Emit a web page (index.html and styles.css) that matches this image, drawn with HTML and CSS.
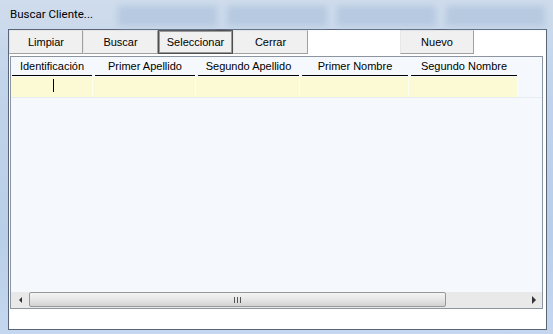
FILE: index.html
```html
<!DOCTYPE html>
<html lang="es">
<head>
  <meta charset="UTF-8">
  <title>Buscar Cliente...</title>
  <link rel="stylesheet" href="styles.css">
</head>
<body>

  <div class="window">
    <div class="titlebar">
      <div class="ghost-tabs"><span></span><span></span><span></span><span></span></div>
      <span class="title">Buscar Cliente...</span>
    </div>

    <div class="client">
      <div class="toolbar">
        <button class="btn btn-first">Limpiar</button>
        <button class="btn">Buscar</button>
        <button class="btn btn-focus">Seleccionar</button>
        <button class="btn">Cerrar</button>
        <button class="btn btn-nuevo">Nuevo</button>
      </div>

      <div class="grid">
        <div class="grid-head">
          <div class="head-cell">Identificación</div>
          <div class="head-cell">Primer Apellido</div>
          <div class="head-cell">Segundo Apellido</div>
          <div class="head-cell">Primer Nombre</div>
          <div class="head-cell">Segundo Nombre</div>
        </div>
        <div class="grid-row">
          <div class="cell"><span class="caret"></span></div>
          <div class="cell"></div>
          <div class="cell"></div>
          <div class="cell"></div>
          <div class="cell"></div>
        </div>
        <div class="grid-empty"></div>
        <div class="hscroll">
          <div class="arrow-btn"><span class="arrow-left"></span></div>
          <div class="thumb"><span class="grip"></span></div>
          <div class="track"></div>
          <div class="arrow-btn arrow-btn-right"><span class="arrow-right"></span></div>
        </div>
      </div>

      <div class="client-foot"></div>
    </div>
  </div>

</body>
</html>
```

FILE: styles.css
```css
body { margin: 0; width: 553px; height: 334px; overflow: hidden; font-family: "Liberation Sans", Arial, sans-serif; font-size: 11px; color: #000; background: linear-gradient(#cfdcec, #c0d3ea 30%, #b9cee8 70%, #c4d7ee); }
.window { display: flex; flex-direction: column; height: 334px; }

/* faint blurred tabs of the window behind the glass title bar */
.titlebar { position: relative; height: 29px; flex: none; }
.ghost-tabs { position: absolute; top: 6px; left: 118px; right: 8px; height: 20px; display: flex; gap: 10px; filter: blur(3px); }
.ghost-tabs span { flex: 1; background: #b6c9e0; }
.title { position: relative; display: block; padding: 7px 0 0 10px; font-family: Roboto, "Liberation Sans", sans-serif; font-size: 11.5px; line-height: 14px; }

.client { flex: 1; margin: 0 6px 4px 8px; border: 1px solid #59657a; background: #fff; display: flex; flex-direction: column; }

.toolbar { display: flex; height: 24px; flex: none; }
.btn { box-sizing: border-box; width: 75px; height: 24px; padding: 0; font-family: "Liberation Sans", Arial, sans-serif; font-size: 11px; color: #000; background: #f0f0f0; border: 1px solid; border-color: #e6e6e6 #9f9f9f #9f9f9f #e6e6e6; }
.btn-first { width: 74px; }
.btn-focus { border: 1px solid #4f4f4f; box-shadow: inset 0 0 0 1px #9a9a9a; }
.btn-nuevo { width: 74px; margin-left: 92px; }

.grid { height: 253px; flex: none; box-sizing: border-box; margin: 2px 3px 0 1px; border: 1px solid #8d95a1; background: #f5f9fd; display: flex; flex-direction: column; }
.grid-head { display: grid; grid-template-columns: 82px 103px 104px 109px 109px; height: 18px; flex: none; }
.head-cell { margin: 0 1px 0 1px; border-bottom: 1px solid #000; text-align: center; line-height: 18px; white-space: nowrap; }
.head-cell + .head-cell { margin-left: 2px; }
.grid-row { display: grid; grid-template-columns: 82px 103px 104px 109px 109px; height: 20px; margin-top: 2px; flex: none; border-bottom: 1px solid #e8edf2; }
.cell { background: #fbfad5; border-right: 1px solid #fdfdf0; }
.caret { display: block; width: 1px; height: 13px; margin: 2px 0 0 42px; background: #000; }
.grid-empty { flex: 1; }

.hscroll { display: flex; height: 16px; flex: none; background: #e9e9e9; }
.arrow-btn { width: 18px; display: flex; align-items: center; justify-content: center; }
.arrow-btn-right { width: 17px; }
.arrow-left { width: 0; height: 0; border-top: 3px solid transparent; border-bottom: 3px solid transparent; border-right: 3px solid #333; }
.arrow-right { width: 0; height: 0; border-top: 4px solid transparent; border-bottom: 4px solid transparent; border-left: 4px solid #333; }
.thumb { box-sizing: border-box; width: 417px; height: 15px; border: 1px solid #979797; border-radius: 2px; background: linear-gradient(#f4f4f4, #e6e6e6 50%, #d2d2d2); display: flex; align-items: center; justify-content: center; }
.grip { width: 7px; height: 6px; background: repeating-linear-gradient(90deg, #555 0 1px, transparent 1px 3px); }
.track { flex: 1; }

.client-foot { flex: 1; }
```
